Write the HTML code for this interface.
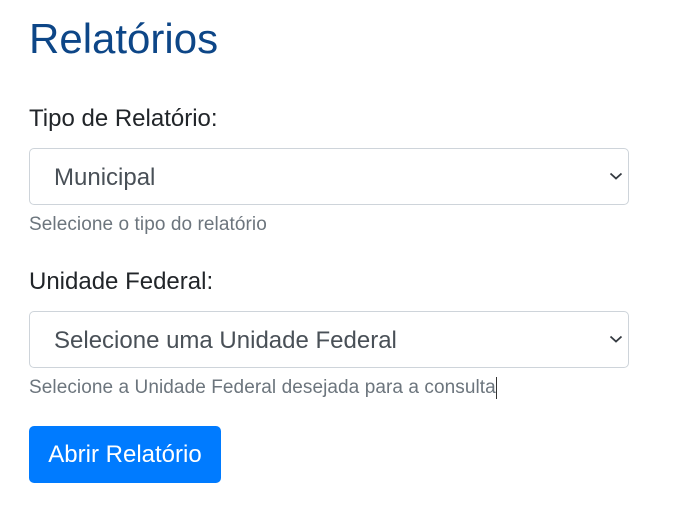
<!DOCTYPE html>
<html><head><meta charset="utf-8"><style>
body{margin:0;background:#fff;font-family:"Liberation Sans",sans-serif;width:689px;height:517px;position:relative;overflow:hidden}
.a{position:absolute;white-space:nowrap}
h1{position:absolute;left:29px;top:12px;margin:0;font-weight:400;font-size:42px;line-height:54px;color:#0d4687}
.l{font-size:24px;color:#212529;line-height:28px}
.s{left:29px;width:598px;height:55px;border:1px solid #ced4da;border-radius:5px;box-sizing:content-box}
.s span{position:absolute;left:24px;top:15px;font-size:24px;color:#495057;line-height:28px}
.s svg{position:absolute;right:5px;top:22px}
.h{font-size:19px;color:#6c757d;line-height:22px;letter-spacing:0.08px}
.b{left:29px;top:426px;width:192px;height:57px;background:#007bff;border-radius:5px;color:#fff;font-size:24px;line-height:57px;text-align:center}
</style></head><body>
<h1>Relatórios</h1>
<div class="a l" style="left:29px;top:105px">Tipo de Relatório:</div>
<div class="a s" style="top:148px"><span>Municipal</span><svg width="14" height="10" viewBox="0 0 14 10"><path d="M1.5 2.5l5.5 5 5.5-5" fill="none" stroke="#343a40" stroke-width="1.8"/></svg></div>
<div class="a h" style="left:29px;top:214px">Selecione o tipo do relatório</div>
<div class="a l" style="left:29px;top:268px">Unidade Federal:</div>
<div class="a s" style="top:311px"><span>Selecione uma Unidade Federal</span><svg width="14" height="10" viewBox="0 0 14 10"><path d="M1.5 2.5l5.5 5 5.5-5" fill="none" stroke="#343a40" stroke-width="1.8"/></svg></div>
<div class="a h" style="left:29px;top:377px">Selecione a Unidade Federal desejada para a consulta<span style="display:inline-block;width:1px;height:22px;background:#333;vertical-align:top"></span></div>
<div class="a b">Abrir Relatório</div>
</body></html>
